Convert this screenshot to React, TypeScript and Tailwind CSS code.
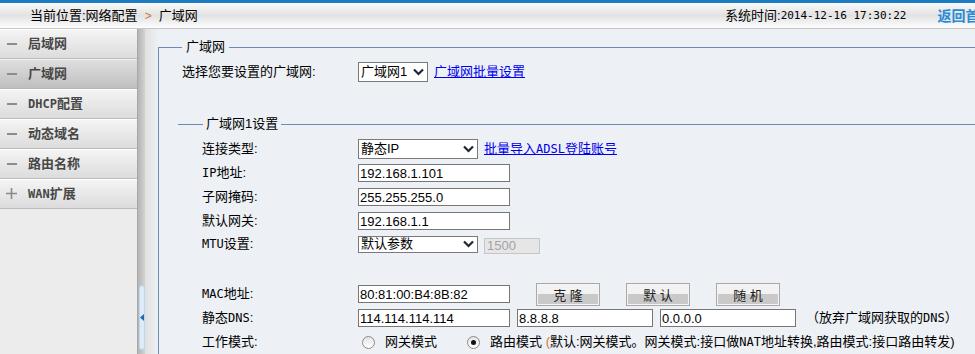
import React from "react";

const mono = "font-['DejaVu_Sans_Mono',monospace] text-[12px]";
const monoTime = "font-['DejaVu_Sans_Mono',monospace] text-[11px]";

function Chevron() {
  return (
    <svg width="11" height="8" viewBox="0 0 11 8" className="shrink-0">
      <path d="M1 1.5 L5.5 6 L10 1.5" fill="none" stroke="#1c2636" strokeWidth="2.2" />
    </svg>
  );
}

function Select({ className, children }: { className: string; children: React.ReactNode }) {
  return (
    <div className={"flex items-center border border-[#7a7a7a] bg-white pl-[2px] pr-[3px] leading-[16px] shrink-0 " + className}>
      <span className="flex-1 whitespace-nowrap">{children}</span>
      <Chevron />
    </div>
  );
}

function Input({ className, value }: { className: string; value: string }) {
  return (
    <input
      readOnly
      value={value}
      className={"shrink-0 border border-[#767676] bg-white px-[1px] text-[13px] text-black font-['Liberation_Sans',sans-serif] outline-none " + className}
    />
  );
}

function Btn({ label }: { label: string }) {
  return (
    <div className="shrink-0 ml-[26px] w-[64px] h-[23px] border border-[#a9a9a9] p-[1px] bg-[#f4f4f4]">
      <div className="h-full flex items-center justify-center pt-[3px] text-[13px] text-[#222] bg-[linear-gradient(#f2f2f2_0,#f2f2f2_48%,#c9c9c9_48%,#c9c9c9_100%)]">
        {label}
      </div>
    </div>
  );
}

function Radio({ checked }: { checked?: boolean }) {
  return (
    <div className="w-[13px] h-[13px] rounded-full border border-[#8a8a8a] bg-[linear-gradient(#e4e4e4,#ffffff)] flex items-center justify-center shrink-0">
      {checked && <div className="w-[5px] h-[5px] rounded-full bg-[#111]" />}
    </div>
  );
}

function SideItem({ label, active, plus }: { label: React.ReactNode; active?: boolean; plus?: boolean }) {
  return (
    <div
      className={
        active
          ? "h-[30px] flex items-center border-b border-[#b4b4b4] bg-gradient-to-b from-[#e0e0e0] to-[#bfbfbf] shadow-[inset_0_1px_0_#f0f0f0]"
          : "h-[30px] flex items-center border-b border-[#bcbcbc] bg-gradient-to-b from-[#f5f5f5] to-[#dcdcdc] shadow-[inset_0_1px_0_#ffffff]"
      }
    >
      <div className="w-[28px] flex items-center justify-center pr-[5px]">
        {plus ? (
          <svg width="11" height="11" viewBox="0 0 11 11">
            <path d="M0 5.5 H11 M5.5 0 V11" stroke="#8a8a8a" strokeWidth="1.6" />
          </svg>
        ) : (
          <div className="w-[10px] h-[2px] bg-[#8c8c8c]" />
        )}
      </div>
      <span className="font-bold text-[13px] text-[#474747] leading-[16px]">{label}</span>
    </div>
  );
}

export default function App() {
  return (
    <div className="w-[975px] h-[354px] overflow-hidden bg-[#edf0f4] text-[13px] text-black font-['Liberation_Sans','Noto_Sans_CJK_SC',sans-serif] leading-[16px]">
      {/* top bar */}
      <div className="h-[3px] bg-[#1b7cc2]" />
      <div className="h-[26px] flex items-center border-b border-[#c5c5c5] bg-gradient-to-b from-[#fafafa] via-[#e2e2e2] to-[#fdfdfd] whitespace-nowrap overflow-hidden">
        <div className="w-[725px] shrink-0 pl-[30px] flex items-center">
          <span>当前位置:网络配置</span>
          <span className="mx-[7px] text-[#c77a38] text-[12px]">&gt;</span>
          <span>广域网</span>
        </div>
        <div className="flex items-center shrink-0">
          <span>系统时间:</span>
          <span className={monoTime}>2014-12-16 17:30:22</span>
        </div>
        <span className="shrink-0 ml-[31px] font-bold text-[14px] text-[#2a8ad6]">返回首页</span>
      </div>

      <div className="flex h-[325px]">
        {/* sidebar */}
        <div className="w-[137px] shrink-0 bg-[#ececec] flex flex-col">
          <SideItem label="局域网" />
          <SideItem label="广域网" active />
          <SideItem label={<><span className={mono + " font-bold"}>DHCP</span>配置</>} />
          <SideItem label="动态域名" />
          <SideItem label="路由名称" />
          <SideItem label={<><span className={mono + " font-bold"}>WAN</span>扩展</>} plus />
        </div>
        {/* splitter */}
        <div className="w-[8px] shrink-0 bg-gradient-to-r from-[#b5b5b5] to-[#d2d2d2] flex flex-col items-center border-l border-[#a8a8a8]">
          <div className="mt-[256px] w-[6px] h-[65px] rounded-[3px] bg-[#dcebf7] border border-[#bcd6ea] flex items-center justify-center">
            <svg width="5" height="9" viewBox="0 0 5 9">
              <path d="M5 0 L0 4.5 L5 9 Z" fill="#1a6cae" />
            </svg>
          </div>
        </div>
        <div className="w-[13px] shrink-0 bg-gradient-to-r from-[#e0e0e0] to-[#edf0f4]" />

        {/* content */}
        <div className="flex-1 flex flex-col min-w-0">
          <div className="mt-[18px] flex-1 border-t border-l border-[#6d8cb4] pl-[23px] flex flex-col">
            <div className="-mt-[9px] w-fit px-[4px] bg-[#edf0f4] leading-[16px]">广域网</div>
            <div className="mt-[6px] h-[22px] flex items-center">
              <div className="w-[176px] shrink-0">选择您要设置的广域网:</div>
              <Select className="w-[70px] h-[20px]">广域网1</Select>
              <span className="ml-[6px] text-[#0000ee] underline">广域网批量设置</span>
            </div>

            <div className="mt-[41px] -ml-[4px] border-t border-[#6d8cb4] flex flex-col">
              <div className="-mt-[9px] ml-[25px] w-fit px-[3px] bg-[#edf0f4] leading-[16px]">广域网1设置</div>
              <div className="mt-[5px] pl-[24px] flex flex-col whitespace-nowrap">
                <div className="h-[24px] flex items-center">
                  <div className="w-[156px] shrink-0">连接类型:</div>
                  <Select className="w-[120px] h-[20px]">静态IP</Select>
                  <span className="ml-[6px] text-[#0000ee] underline">
                    批量导入<span className={mono}>ADSL</span>登陆账号
                  </span>
                </div>
                <div className="h-[24px] flex items-center">
                  <div className="w-[156px] shrink-0"><span className={mono}>IP</span>地址:</div>
                  <Input className="w-[152px] h-[18px]" value="192.168.1.101" />
                </div>
                <div className="h-[24px] flex items-center">
                  <div className="w-[156px] shrink-0">子网掩码:</div>
                  <Input className="w-[152px] h-[18px]" value="255.255.255.0" />
                </div>
                <div className="h-[24px] flex items-center">
                  <div className="w-[156px] shrink-0">默认网关:</div>
                  <Input className="w-[152px] h-[18px]" value="192.168.1.1" />
                </div>
                <div className="h-[22px] flex items-center">
                  <div className="w-[156px] shrink-0"><span className={mono}>MTU</span>设置:</div>
                  <Select className="w-[120px] h-[17px]">默认参数</Select>
                  <div className="shrink-0 ml-[6px] mt-[3px] w-[56px] h-[16px] border border-[#c6c6c6] bg-[#e6e6e6] text-[#a3a3a3] pl-[2px] leading-[14px] font-['Liberation_Sans',sans-serif]">
                    1500
                  </div>
                </div>
                <div className="h-[27px]" />
                <div className="h-[24px] flex items-center">
                  <div className="w-[156px] shrink-0"><span className={mono}>MAC</span>地址:</div>
                  <Input className="w-[152px] h-[18px]" value="80:81:00:B4:8B:82" />
                  <Btn label="克 隆" />
                  <Btn label="默 认" />
                  <Btn label="随 机" />
                </div>
                <div className="h-[24px] flex items-center">
                  <div className="w-[156px] shrink-0">静态<span className={mono}>DNS</span>:</div>
                  <Input className="w-[152px] h-[18px]" value="114.114.114.114" />
                  <Input className="ml-[7px] w-[136px] h-[18px]" value="8.8.8.8" />
                  <Input className="ml-[7px] w-[136px] h-[18px]" value="0.0.0.0" />
                  <span className="ml-[10px]">（放弃广域网获取的<span className={mono}>DNS</span>）</span>
                </div>
                <div className="h-[24px] flex items-center">
                  <div className="w-[160px] shrink-0">工作模式:</div>
                  <Radio />
                  <span className="ml-[10px]">网关模式</span>
                  <div className="ml-[30px]"><Radio checked /></div>
                  <span className="ml-[10px]">
                    路由模式 <span className="text-[#c77a38]">(</span>默认:网关模式。网关模式:接口做<span className={mono}>NAT</span>地址转换,路由模式:接口路由转发)
                  </span>
                </div>
              </div>
            </div>
          </div>
        </div>
      </div>
    </div>
  );
}
